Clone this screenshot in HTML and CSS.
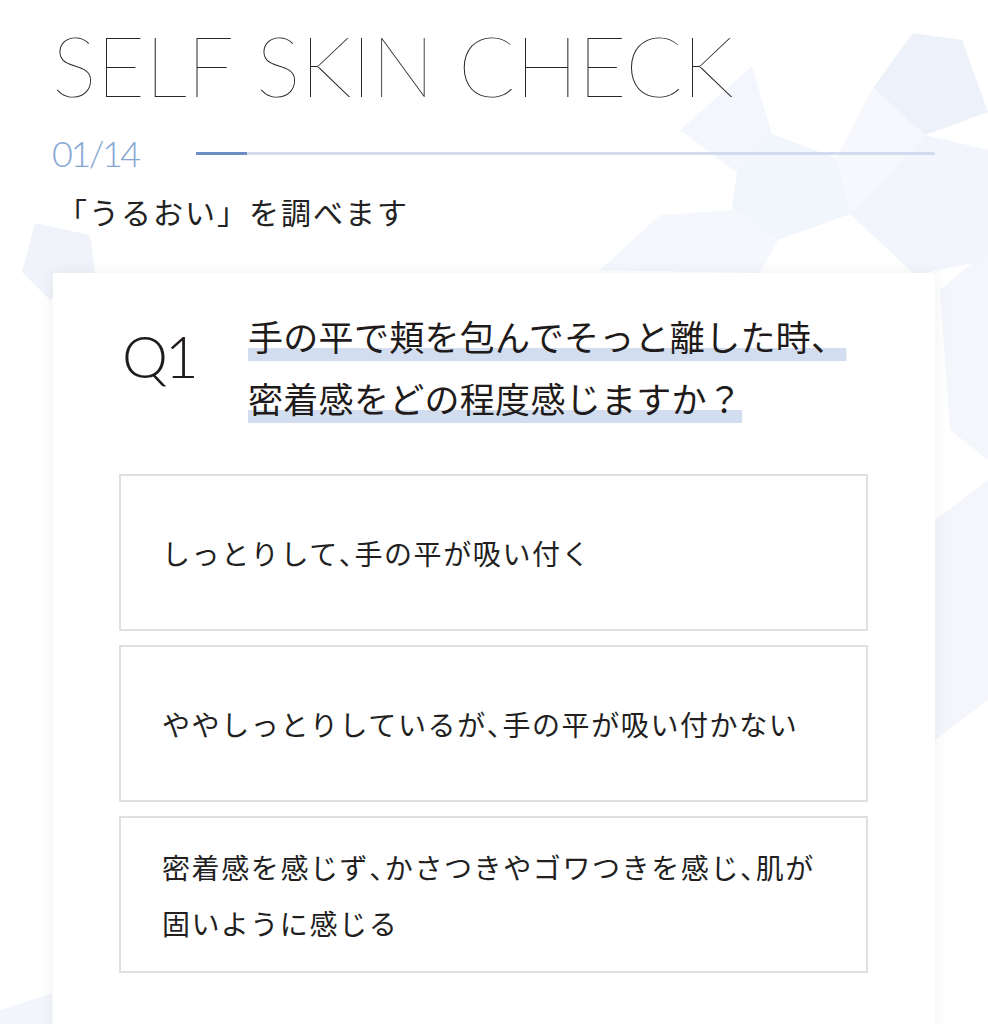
FILE: index.html
```html
<!DOCTYPE html>
<html lang="ja">
<head>
<meta charset="utf-8">
<title>SELF SKIN CHECK</title>
<link rel="stylesheet" href="styles.css">
</head>
<body>
<div class="page">
  <svg class="bg" viewBox="0 0 988 1024" width="988" height="1024" aria-hidden="true">
    <polygon points="913,33 962,40 988,112 925,135 873,88" fill="#edf1fa"/>
    <polygon points="680,130 752,66 772,134 744,178" fill="#f3f6fc"/>
    <polygon points="737,172 772,134 836,158 850,214 778,240 732,208" fill="#f1f5fc"/>
    <polygon points="850,214 925,135 988,150 988,260 915,275" fill="#f2f5fb"/>
    <polygon points="600,270 660,215 735,210 778,240 760,273" fill="#f4f7fc"/>
    <polygon points="836,158 873,88 925,135 850,214" fill="#f6f8fd"/>
    <polygon points="940,290 988,250 988,460 950,430" fill="#f3f6fb"/>
    <polygon points="935,520 988,480 988,700 935,740" fill="#f4f6fb"/>
    <polygon points="22,272 35,223 90,235 95,272 50,300" fill="#f1f3fa"/>
    <polygon points="0,1010 52,993 52,1024 0,1024" fill="#f2f5fb"/>
  </svg>

  <header class="head">
    <h1 class="title">SELF SKIN CHECK</h1>
    <div class="progress">
      <span class="count">01/14</span>
      <div class="bar"><div class="bar-fill"></div></div>
    </div>
    <p class="lead">「うるおい」を調べます</p>
  </header>

  <section class="card">
    <div class="question">
      <span class="qnum">Q1</span>
      <p class="qtext"><span class="hl">手の平で頬を包んでそっと離した時、</span><br><span class="hl">密着感をどの程度感じますか？</span></p>
    </div>
    <ul class="options">
      <li class="option"><span>しっとりして<span class="comma">、</span>手の平が吸い付く</span></li>
      <li class="option"><span>ややしっとりしているが<span class="comma">、</span>手の平が吸い付かない</span></li>
      <li class="option"><span>密着感を感じず<span class="comma">、</span>かさつきやゴワつきを感じ<span class="comma">、</span>肌が<br>固いように感じる</span></li>
    </ul>
  </section>
</div>
</body>
</html>
```

FILE: styles.css
```css
* { box-sizing: border-box; }

html, body {
  margin: 0;
  padding: 0;
  background: #ffffff;
}

body {
  font-family: "Noto Sans CJK JP", "Noto Sans", sans-serif;
  color: #231f1f;
}

.page {
  position: relative;
  width: 988px;
  height: 1024px;
  overflow: hidden;
}

.bg {
  position: absolute;
  left: 0;
  top: 0;
}

.head {
  position: relative;
  padding: 17px 0 0 52px;
}

.title {
  margin: 0;
  font-family: "Lato", sans-serif;
  font-weight: 100;
  font-size: 84px;
  line-height: 96px;
  letter-spacing: -0.2px;
  color: #2b2525;
  white-space: nowrap;
}

.progress {
  display: flex;
  align-items: center;
  margin-top: 20px;
  padding-right: 53px;
}

.count {
  font-family: "Lato", sans-serif;
  font-weight: 300;
  font-size: 36px;
  line-height: 40px;
  letter-spacing: -2.5px;
  color: #86a6d6;
  width: 144px;
}

.bar {
  flex: 1;
  height: 3px;
  background: #d3dcef;
}

.bar-fill {
  width: 51px;
  height: 3px;
  background: #6d8fc6;
}

.lead {
  margin: 18px 0 0 5px;
  font-size: 30px;
  line-height: 40px;
  letter-spacing: 2px;
  color: #222;
}

.card {
  position: relative;
  margin: 42px 53px 0 53px;
  height: 800px;
  background: #ffffff;
  box-shadow: 0 0 14px rgba(60, 70, 90, 0.08);
  padding: 32px 67px 0 66px;
}

.question {
  display: flex;
  align-items: flex-start;
}

.qnum {
  width: 129px;
  padding: 20px 0 0 3px;
  font-family: "Lato", sans-serif;
  font-weight: 300;
  font-size: 58px;
  line-height: 62px;
  letter-spacing: -3px;
  color: #1f1b1b;
}

.qtext {
  margin: 0;
  font-size: 35px;
  line-height: 62px;
  letter-spacing: 0.3px;
  color: #1f1b1b;
}

.hl {
  text-decoration: underline;
  text-decoration-color: #d2ddf0;
  text-decoration-thickness: 13px;
  text-underline-offset: -3px;
  text-decoration-skip-ink: none;
}

.options {
  list-style: none;
  margin: 45px 0 0 0;
  padding: 0;
  display: flex;
  flex-direction: column;
  gap: 14px;
}

.option {
  display: flex;
  align-items: center;
  height: 157px;
  padding: 0 30px 0 41px;
  border: 2px solid #e0e0e0;
  background: #ffffff;
  font-size: 28px;
  line-height: 56px;
  letter-spacing: 1.6px;
  color: #231f1f;
}

.comma {
  font-feature-settings: "halt";
}
```
